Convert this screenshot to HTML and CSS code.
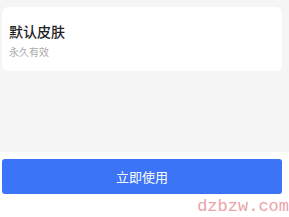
FILE: index.html
```html
<!DOCTYPE html>
<html lang="zh">
<head>
<meta charset="utf-8">
<link rel="stylesheet" href="styles.css">
</head>
<body>
<div class="page">
  <div class="content">
    <div class="card">
      <div class="title">默认皮肤</div>
      <div class="sub">永久有效</div>
    </div>
  </div>
  <div class="footer">
    <button class="btn">立即使用</button>
  </div>
  <div class="watermark">dzbzw.com</div>
</div>
</body>
</html>
```
FILE: styles.css
```css
html, body {
  margin: 0;
  padding: 0;
  background: #ffffff;
}
.page {
  position: relative;
  width: 289px;
  height: 217px;
  overflow: hidden;
  font-family: "Noto Sans CJK SC", "Noto Sans", sans-serif;
}
.content {
  background: #f5f5f5;
  height: 152px;
  padding: 7px 7px 0 2px;
  box-sizing: border-box;
}
.card {
  background: #ffffff;
  border-radius: 6px;
  padding: 14px 7px 12px 7px;
}
.title {
  font-size: 14px;
  line-height: 20px;
  color: #222222;
  font-weight: 500;
}
.sub {
  margin-top: 4px;
  font-size: 10px;
  line-height: 14px;
  color: #aaaaaa;
}
.footer {
  padding: 7px 7px 0 2px;
}
.btn {
  display: block;
  width: 100%;
  height: 35px;
  border: none;
  border-radius: 3px;
  background: #3b74f6;
  color: #ffffff;
  font-family: "Noto Sans CJK SC", sans-serif;
  font-size: 13px;
  padding: 0;
}
.watermark {
  position: absolute;
  right: 0;
  bottom: 1px;
  font-family: "Liberation Mono", monospace;
  font-size: 17px;
  line-height: 18px;
  color: #eba3a8;
}
```
